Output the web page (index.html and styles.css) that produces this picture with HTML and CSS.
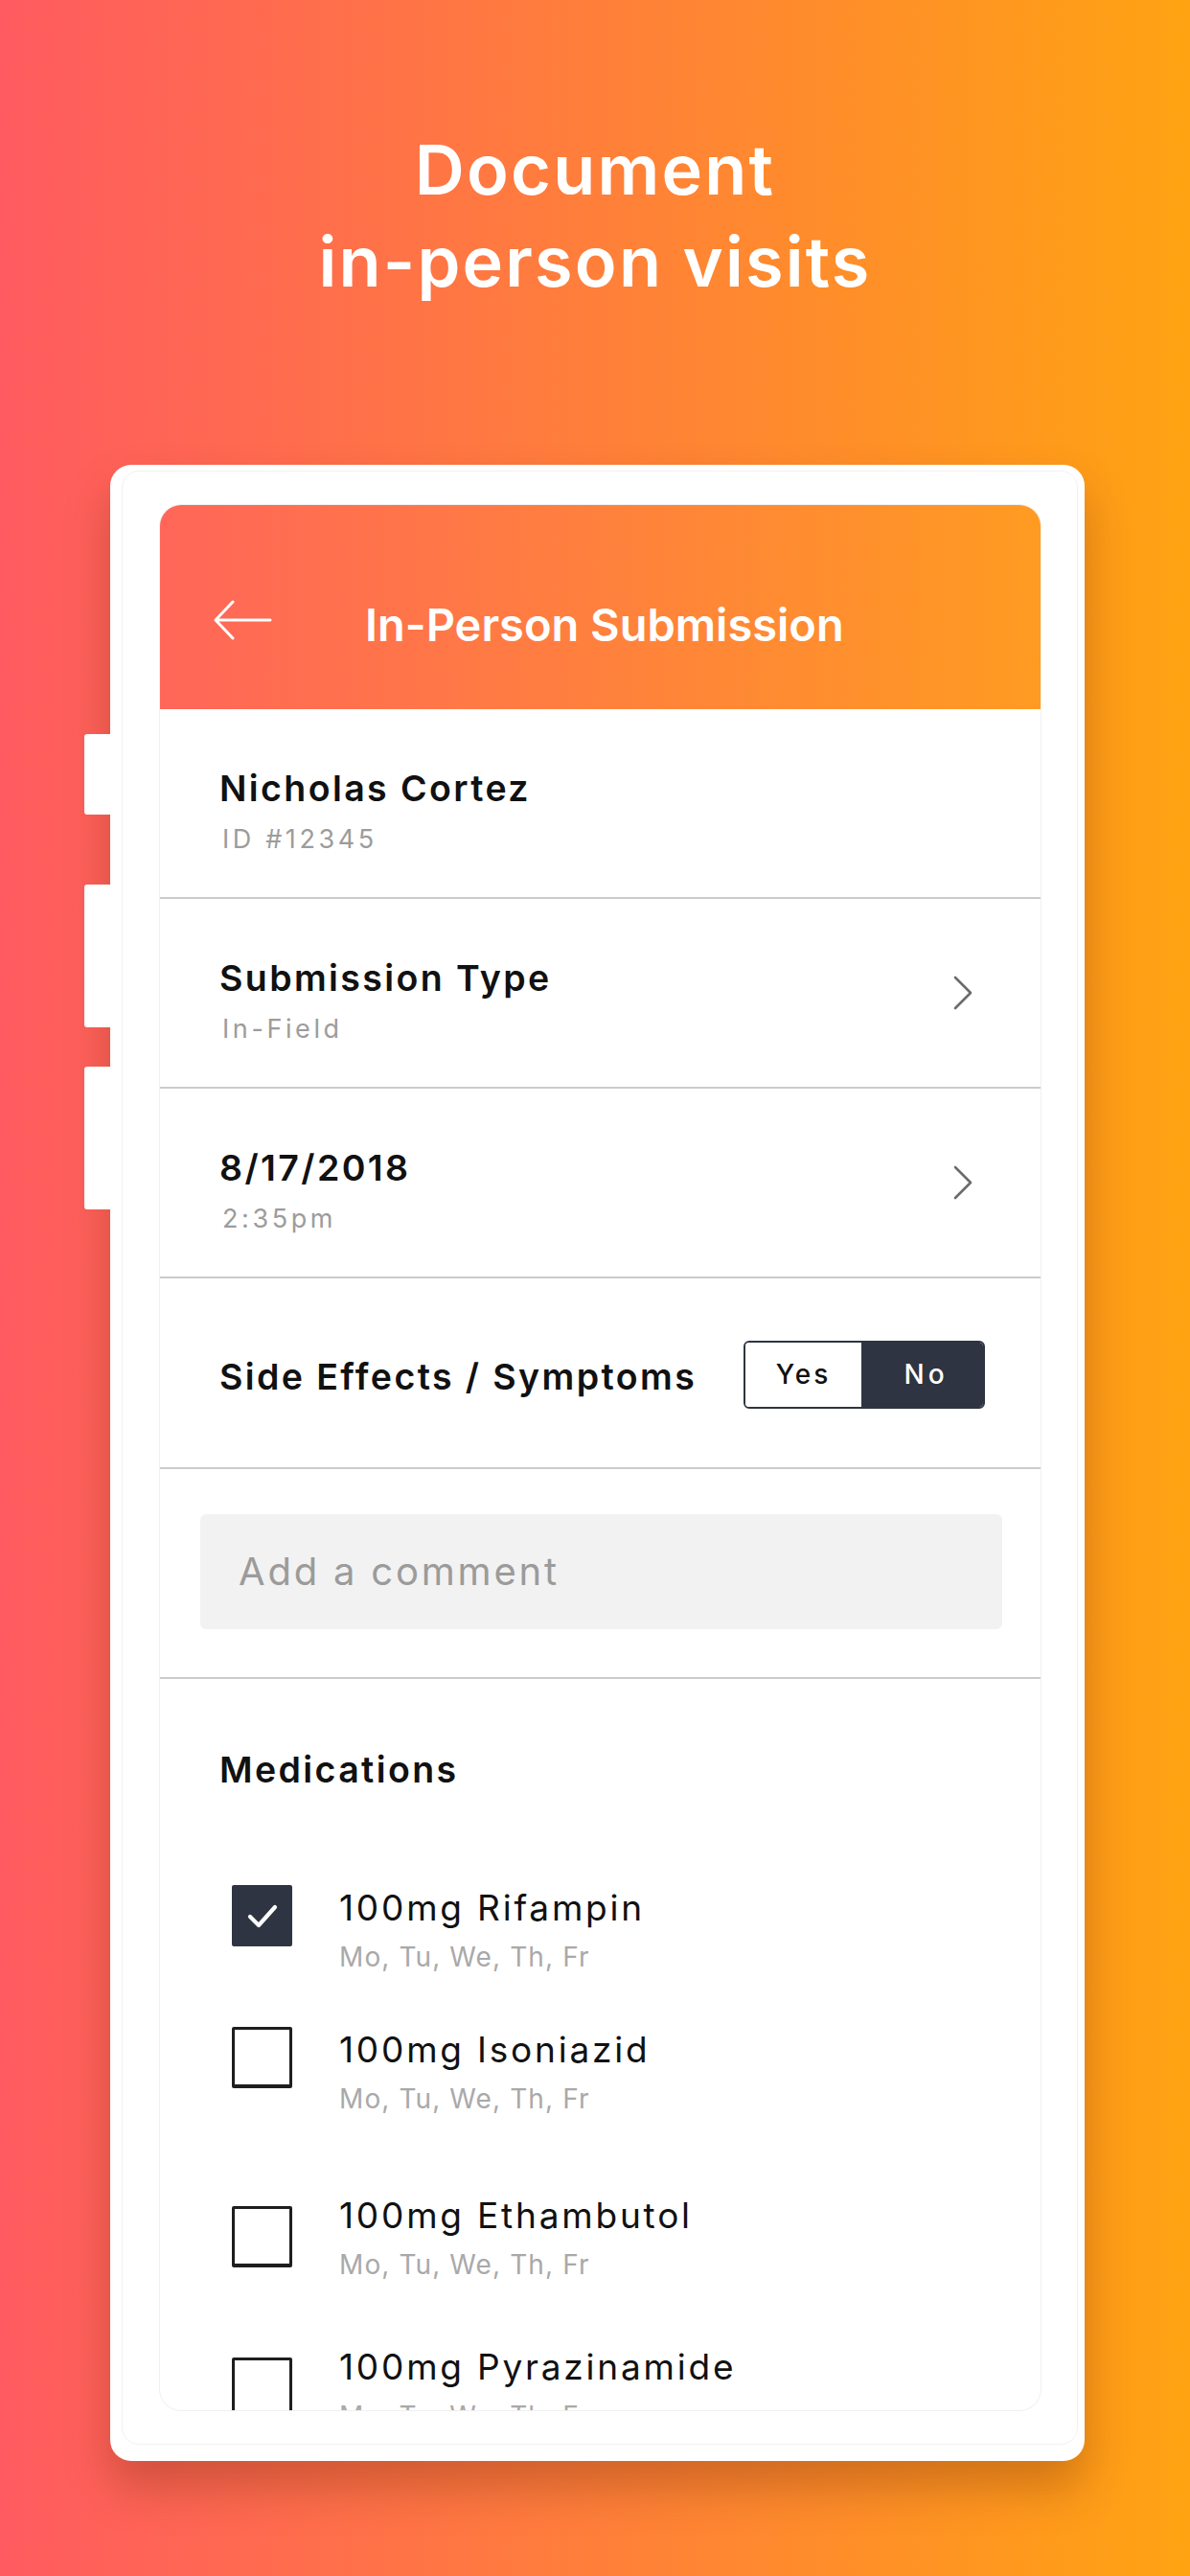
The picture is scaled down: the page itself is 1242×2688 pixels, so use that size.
FILE: index.html
```html
<!DOCTYPE html>
<html lang="en">
<head>
<meta charset="utf-8">
<title>Document in-person visits</title>
<link rel="stylesheet" href="styles.css">
</head>
<body>
<main class="page">
  <h1 class="headline">Document<br>in-person visits</h1>

  <div class="phone">
    <span class="side-btn side-btn--a"></span>
    <span class="side-btn side-btn--b"></span>
    <span class="side-btn side-btn--c"></span>
    <div class="bezel">
      <div class="screen">
        <header class="appbar">
          <svg class="appbar-back" width="62" height="44" viewBox="0 0 62 44" aria-hidden="true">
            <path d="M3 22 H60 M21 3 L3 22 L21 41" fill="none" stroke="#fff" stroke-width="3" stroke-linecap="round" stroke-linejoin="round"/>
          </svg>
          <h2 class="appbar-title">In-Person Submission</h2>
        </header>

        <div class="row">
          <div class="row-text">
            <div class="row-title">Nicholas Cortez</div>
            <div class="row-sub">ID #12345</div>
          </div>
        </div>

        <div class="row">
          <div class="row-text">
            <div class="row-title">Submission Type</div>
            <div class="row-sub">In-Field</div>
          </div>
          <svg class="chevron" width="22" height="36" viewBox="0 0 22 36" aria-hidden="true">
            <path d="M3 2 L19 18 L3 34" fill="none" stroke="#6b6b6b" stroke-width="2.6" stroke-linecap="round" stroke-linejoin="round"/>
          </svg>
        </div>

        <div class="row">
          <div class="row-text">
            <div class="row-title">8/17/2018</div>
            <div class="row-sub">2:35pm</div>
          </div>
          <svg class="chevron" width="22" height="36" viewBox="0 0 22 36" aria-hidden="true">
            <path d="M3 2 L19 18 L3 34" fill="none" stroke="#6b6b6b" stroke-width="2.6" stroke-linecap="round" stroke-linejoin="round"/>
          </svg>
        </div>

        <div class="row row--switch">
          <div class="row-title switch-label">Side Effects / Symptoms</div>
          <div class="toggle">
            <span class="toggle-opt">Yes</span>
            <span class="toggle-opt toggle-opt--on">No</span>
          </div>
        </div>

        <div class="comment-row">
          <div class="comment">Add a comment</div>
        </div>

        <section class="meds">
          <h3 class="row-title meds-title">Medications</h3>
          <ul class="med-list">
            <li class="med">
              <span class="checkbox checkbox--on">
                <svg width="40" height="40" viewBox="0 0 40 40" aria-hidden="true">
                  <path d="M7 21 L16 30 L33 11" fill="none" stroke="#fff" stroke-width="4.2" stroke-linecap="round" stroke-linejoin="round"/>
                </svg>
              </span>
              <div class="med-text">
                <div class="med-name">100mg Rifampin</div>
                <div class="med-days">Mo, Tu, We, Th, Fr</div>
              </div>
            </li>
            <li class="med">
              <span class="checkbox"></span>
              <div class="med-text">
                <div class="med-name">100mg Isoniazid</div>
                <div class="med-days">Mo, Tu, We, Th, Fr</div>
              </div>
            </li>
            <li class="med med--low">
              <span class="checkbox"></span>
              <div class="med-text">
                <div class="med-name">100mg Ethambutol</div>
                <div class="med-days">Mo, Tu, We, Th, Fr</div>
              </div>
            </li>
            <li class="med med--low">
              <span class="checkbox"></span>
              <div class="med-text">
                <div class="med-name">100mg Pyrazinamide</div>
                <div class="med-days">Mo, Tu, We, Th, Fr</div>
              </div>
            </li>
          </ul>
        </section>
      </div>
    </div>
  </div>
</main>
</body>
</html>
```

FILE: styles.css
```css
* {
  box-sizing: border-box;
}

html, body {
  margin: 0;
  padding: 0;
}

body {
  width: 1242px;
  height: 2688px;
  overflow: hidden;
  font-family: Inter, "Noto Sans", "Liberation Sans", sans-serif;
  background: linear-gradient(90deg, #ff5b60 0%, #ff7f3a 50%, #ffa312 100%);
}

.page {
  width: 1242px;
  height: 2688px;
  padding-top: 129px;
}

.headline {
  margin: 0;
  color: #fff;
  text-align: center;
  font-size: 72px;
  font-weight: 600;
  line-height: 96px;
  letter-spacing: 2.2px;
}

/* ---------- phone frame ---------- */
.phone {
  position: relative;
  width: 1017px;
  height: 2083px;
  margin: 164px 0 0 115px;
  padding: 6px 7px 17px 12px;
  background: #fff;
  border-radius: 22px;
  box-shadow: 0 28px 48px rgba(110, 40, 10, 0.32);
}

.side-btn {
  position: absolute;
  left: -27px;
  width: 27px;
  background: #fff;
  border-radius: 3px 0 0 3px;
}

.side-btn--a { top: 281px; height: 84px; }
.side-btn--b { top: 438px; height: 149px; }
.side-btn--c { top: 628px; height: 149px; }

.bezel {
  width: 998px;
  height: 2060px;
  padding: 35px 38px 35px 39px;
  border: 1px solid #f1f1f1;
  border-radius: 18px;
}

.screen {
  width: 919px;
  height: 1988px;
  overflow: hidden;
  background: #fff;
  border-radius: 22px;
  box-shadow: 0 0 0 1px #f0f0f0;
}

/* ---------- app bar ---------- */
.appbar {
  display: flex;
  align-items: center;
  height: 213px;
  padding: 26px 0 0 55px;
  background: linear-gradient(90deg, #ff6659 0%, #ff9b21 100%);
}

.appbar-back {
  flex: none;
  display: block;
}

.appbar-title {
  margin: 10px 0 0 97px;
  color: #fff;
  font-size: 47px;
  font-weight: 600;
  line-height: 56px;
  letter-spacing: 0;
}

/* ---------- list rows ---------- */
.row {
  display: flex;
  align-items: center;
  justify-content: space-between;
  padding: 61px 58px 44px 62px;
  border-bottom: 2px solid #cbcbcb;
}

.row-text {
  display: flex;
  flex-direction: column;
  gap: 15px;
}

.row-title {
  margin: 0;
  color: #111;
  font-size: 37.5px;
  font-weight: 600;
  line-height: 44px;
  letter-spacing: 2.4px;
}

.row-sub {
  padding-left: 3px;
  color: #9c9c9c;
  font-size: 27px;
  font-weight: 400;
  line-height: 32px;
  letter-spacing: 3.6px;
}

.chevron {
  flex: none;
  display: block;
  margin: 0 12px 17px 0;
}

.row--switch {
  height: 199px;
  padding-top: 0;
  padding-bottom: 0;
}

.switch-label {
  margin-top: 9px;
}

.toggle {
  display: flex;
  height: 71px;
  margin-top: 3px;
  border: 2px solid #2e3441;
  border-radius: 6px;
  overflow: hidden;
}

.toggle-opt {
  display: flex;
  align-items: center;
  justify-content: center;
  width: 121px;
  background: #fff;
  color: #111;
  font-size: 28px;
  font-weight: 500;
  letter-spacing: 3px;
}

.toggle-opt--on {
  width: 127px;
  padding-left: 8px;
  background: #2e3441;
  color: #fff;
  letter-spacing: 4px;
}

/* ---------- comment ---------- */
.comment-row {
  padding: 47px 40px 50px 42px;
  border-bottom: 2px solid #cbcbcb;
}

.comment {
  display: flex;
  align-items: center;
  height: 120px;
  padding: 0 0 2px 40px;
  background: #f2f2f2;
  border-radius: 6px;
  color: #9b9b9b;
  font-size: 40px;
  font-weight: 400;
  letter-spacing: 2.8px;
}

/* ---------- medications ---------- */
.meds {
  padding: 73px 40px 0 62px;
}

.med-list {
  list-style: none;
  margin: 98px 0 0 0;
  padding: 0;
}

.med {
  display: flex;
  align-items: flex-start;
}

.med:nth-child(2) { margin-top: 57px; }
.med:nth-child(3) { margin-top: 84px; }
.med:nth-child(4) { margin-top: 69px; }

.checkbox {
  flex: none;
  display: flex;
  align-items: center;
  justify-content: center;
  width: 63px;
  height: 64px;
  margin-left: 13px;
  border: 3px solid #1e1e1e;
  border-bottom-width: 4px;
  border-radius: 2px;
  background: #fff;
}

.checkbox--on {
  background: #2e3441;
  border-color: #2e3441;
}

.med--low .checkbox {
  margin-top: 12px;
}

.med-text {
  display: flex;
  flex-direction: column;
  gap: 13px;
  padding-top: 2px;
  margin-left: 49px;
}

.med--low .med-text {
  padding-top: 0;
}

.med-name {
  color: #111;
  font-size: 37px;
  font-weight: 400;
  line-height: 44px;
  letter-spacing: 2.8px;
}

.med-days {
  color: #a9a9a9;
  font-size: 28px;
  font-weight: 400;
  line-height: 32px;
  letter-spacing: 1.1px;
}
```
